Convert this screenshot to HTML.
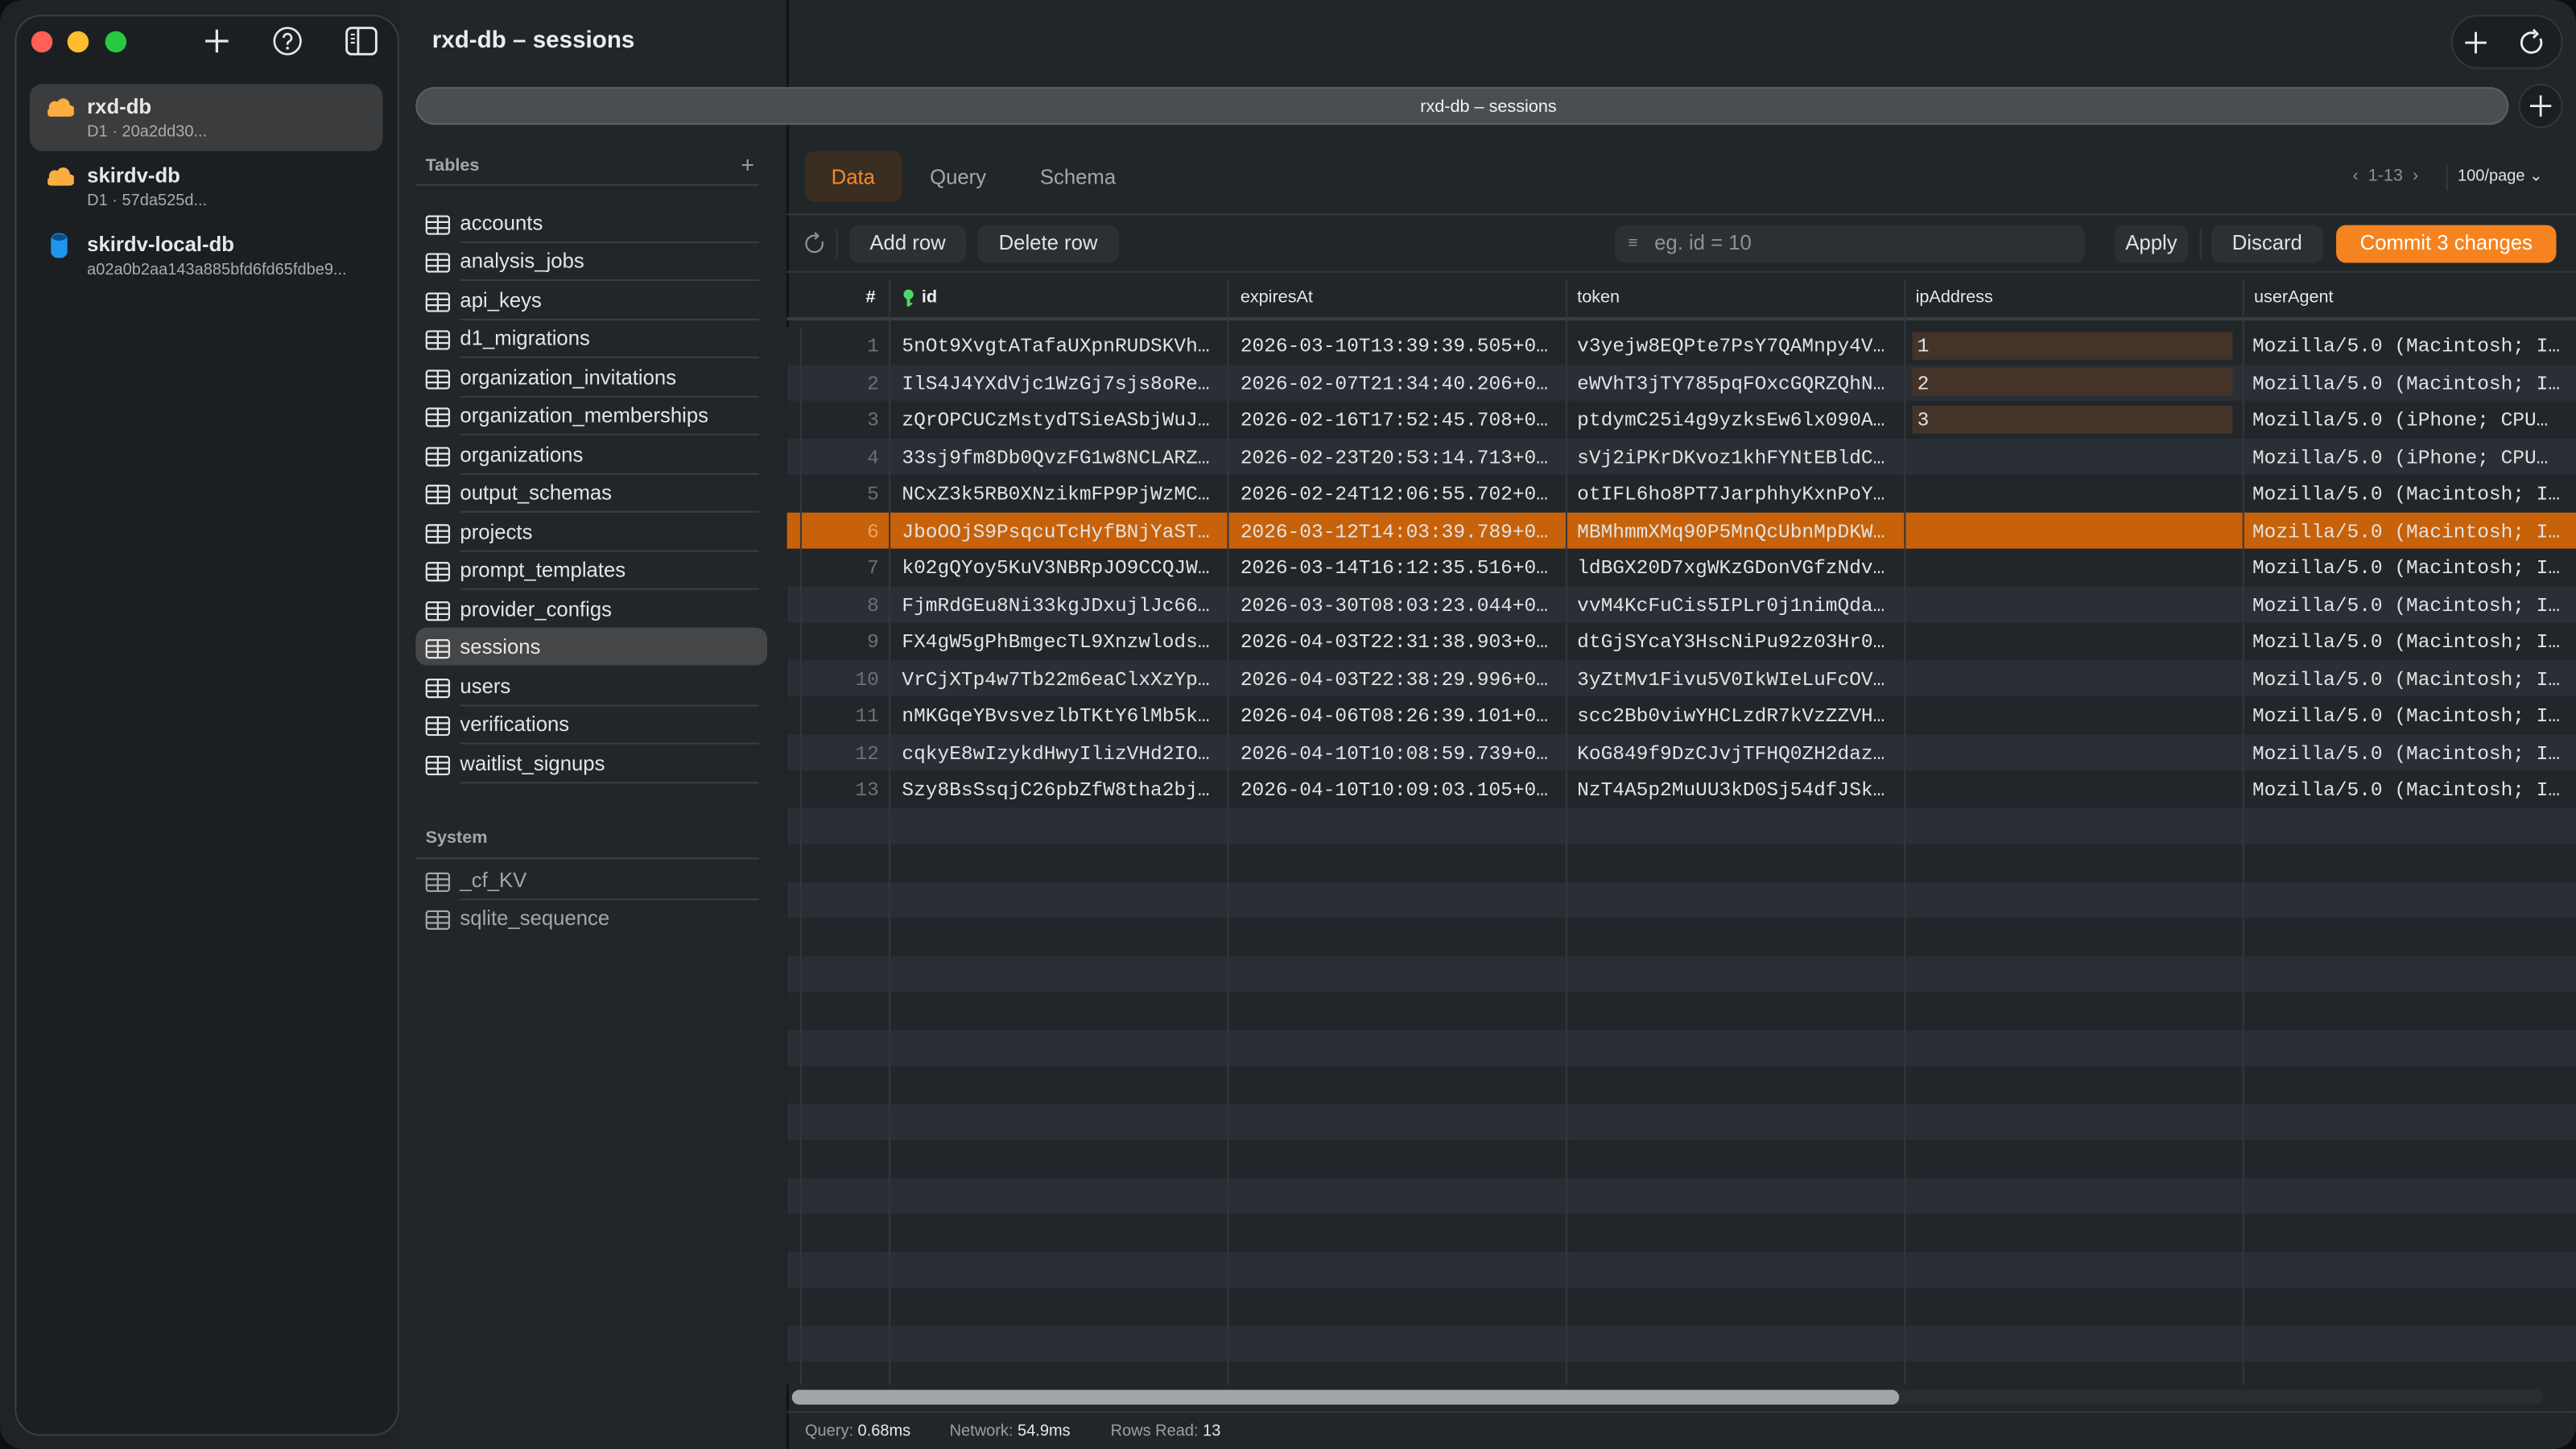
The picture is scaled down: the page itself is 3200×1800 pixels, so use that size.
<!DOCTYPE html>
<html><head><meta charset="utf-8"><style>
*{box-sizing:border-box;margin:0;padding:0}
html,body{width:3200px;height:1800px;overflow:hidden;background:#0d0e10}
#s{position:absolute;left:0;top:0;width:1568px;height:882px;transform:scale(2.040816);transform-origin:0 0;font-family:"Liberation Sans",sans-serif;color:#e6e7e8}
.win{position:absolute;left:0;top:0;width:1568px;height:882px;border-radius:14px;background:#1f2227;overflow:hidden}
.a{position:absolute;white-space:nowrap}
.side{left:9px;top:9px;width:234px;height:865px;border-radius:16px;background:#1b1f21;border:1px solid #3a3e43}
.mid{left:243px;top:0;width:235px;height:882px;background:#212629}
.main{left:479px;top:0;width:1089px;height:882px;background:#212629;border-left:1px solid #0c0d0e}
.tl{width:13px;height:13px;border-radius:50%;top:19px}
.ti{font-size:12.6px;color:#e8e9ea}
.sep{height:1px;background:#34383c}
.btn{height:23px;border-radius:6px;background:#2c3035;font-size:12.6px;color:#e0e1e2;text-align:center;line-height:23px}
.row{position:absolute;left:0;width:1089px;height:22.5px}
.row .c{position:absolute;top:1px;line-height:22.5px;font-family:"Liberation Mono",monospace;font-size:12px;color:#e2e3e4;white-space:nowrap}
.row .n{width:56px;text-align:right;color:#6d7176;left:0}
.vl{position:absolute;top:170px;width:1px;background:#33373c}
</style></head><body><div id="s"><div class="win">

<div class="a side"></div>
<div class="a tl" style="left:19px;background:#fe5f57"></div>
<div class="a tl" style="left:41px;background:#febc2e"></div>
<div class="a tl" style="left:64px;background:#28c840"></div>
<svg class="a" style="left:124px;top:17px" width="16" height="16" viewBox="0 0 16 16"><path d="M8 1v14M1 8h14" stroke="#e6e7e8" stroke-width="1.6"/></svg>
<svg class="a" style="left:166px;top:16px" width="18" height="18" viewBox="0 0 18 18"><circle cx="9" cy="9" r="8" fill="none" stroke="#e6e7e8" stroke-width="1.3"/><path d="M6.6 7a2.4 2.4 0 1 1 3.4 2.2c-.7.4-1 .8-1 1.6v.5" fill="none" stroke="#e6e7e8" stroke-width="1.3"/><circle cx="9" cy="13.3" r=".9" fill="#e6e7e8"/></svg>
<svg class="a" style="left:210px;top:16px" width="20" height="18" viewBox="0 0 20 18"><rect x="1" y="1" width="18" height="16" rx="3" fill="none" stroke="#e6e7e8" stroke-width="1.4"/><path d="M8 1v16" stroke="#e6e7e8" stroke-width="1.4"/><path d="M3.5 5h2.5M3.5 7.5h2.5M3.5 10h2.5" stroke="#e6e7e8" stroke-width="1"/></svg>

<div class="a" style="left:18px;top:51px;width:215px;height:41px;border-radius:8px;background:#3b3c3e"></div>
<svg class="a" style="left:29px;top:58px" width="16" height="14" viewBox="0 0 16 14"><path d="M2 13a2.5 2.5 0 0 1-1-4.8A3.5 3.5 0 0 1 6 4a4 4 0 0 1 7.5 2A3.4 3.4 0 0 1 13 13z" fill="#fbad41"/></svg>
<div class="a" style="left:53px;top:58px;font-size:12.6px;font-weight:bold">rxd-db</div>
<div class="a" style="left:53px;top:75px;font-size:9.8px;color:#a9abad">D1 · 20a2dd30...</div>
<svg class="a" style="left:29px;top:100px" width="16" height="14" viewBox="0 0 16 14"><path d="M2 13a2.5 2.5 0 0 1-1-4.8A3.5 3.5 0 0 1 6 4a4 4 0 0 1 7.5 2A3.4 3.4 0 0 1 13 13z" fill="#fbad41"/></svg>
<div class="a" style="left:53px;top:100px;font-size:12.6px;font-weight:bold">skirdv-db</div>
<div class="a" style="left:53px;top:117px;font-size:9.8px;color:#a9abad">D1 · 57da525d...</div>
<svg class="a" style="left:30px;top:141px" width="12" height="17" viewBox="0 0 12 17"><rect x="1" y="1" width="10" height="15" rx="4" fill="#1e96f0"/><ellipse cx="6" cy="3.5" rx="4.3" ry="2" fill="#0b4e86"/></svg>
<div class="a" style="left:53px;top:142px;font-size:12.6px;font-weight:bold">skirdv-local-db</div>
<div class="a" style="left:53px;top:159px;font-size:9.8px;color:#a9abad">a02a0b2aa143a885bfd6fd65fdbe9...</div>

<div class="a mid"></div>
<div class="a" style="left:263px;top:17px;font-size:14.5px;font-weight:bold;color:#eceded">rxd-db – sessions</div>
<div class="a" style="left:259px;top:95px;font-size:10.6px;font-weight:bold;color:#a4a7aa">Tables</div>
<div class="a" style="left:451px;top:92px;font-size:14px;color:#9a9da0">+</div>
<div class="a sep" style="left:253px;top:112px;width:209px;background:#3c4045"></div>

<div class="a" style="left:253px;top:382px;width:214px;height:23px;border-radius:7px;background:#444648"></div>

<div id="tables"></div>

<div class="a" style="left:259px;top:504px;font-size:10.6px;font-weight:bold;color:#a4a7aa">System</div>
<div class="a sep" style="left:253px;top:522px;width:209px;background:#3c4045"></div>

<div class="a main"></div>
<div class="a" style="left:1492px;top:9px;width:68px;height:33px;border-radius:17px;background:#1c1f22;border:1px solid #33373a"></div>
<svg class="a" style="left:1499px;top:18px" width="16" height="16" viewBox="0 0 16 16"><path d="M8 1.5v13M1.5 8h13" stroke="#eee" stroke-width="1.4"/></svg>
<svg class="a" style="left:1532px;top:17px" width="18" height="18" viewBox="0 0 18 18"><path d="M14.3 6.5A6 6 0 1 1 11 3.4" fill="none" stroke="#eee" stroke-width="1.4"/><path d="M10 1l2.5 2.6L10 6" fill="none" stroke="#eee" stroke-width="1.4"/></svg>

<div class="a" style="left:253px;top:53px;width:1274px;height:23px;border-radius:12px;background:#4b4e51;border:1px solid #5c5f62"></div>
<div class="a" style="left:279px;top:59px;width:1254px;text-align:center;font-size:10.6px;color:#f2f2f2">rxd-db – sessions</div>
<div class="a" style="left:1533px;top:51px;width:27px;height:27px;border-radius:50%;background:#1c1f22;border:1px solid #33373a"></div>
<svg class="a" style="left:1540px;top:58px" width="13" height="13" viewBox="0 0 13 13"><path d="M6.5 0v13M0 6.5h13" stroke="#eee" stroke-width="1.3"/></svg>

<div class="a" style="left:490px;top:92px;width:59px;height:31px;border-radius:6px;background:#3a2d22"></div>
<div class="a" style="left:506px;top:101px;font-size:12.6px;color:#f38a2c">Data</div>
<div class="a" style="left:566px;top:101px;font-size:12.6px;color:#a4a7aa">Query</div>
<div class="a" style="left:633px;top:101px;font-size:12.6px;color:#a4a7aa">Schema</div>
<div class="a" style="left:1432px;top:101px;font-size:10.6px;color:#8c8f93">‹&nbsp; 1-13 &nbsp;›</div>
<div class="a" style="left:1489px;top:100px;width:1px;height:16px;background:#34383c"></div>
<div class="a" style="left:1496px;top:102px;font-size:9.8px;color:#e0e1e2">100/page ⌄</div>
<div class="a sep" style="left:479px;top:130px;width:1089px;background:#34383c"></div>

<svg class="a" style="left:489px;top:141px" width="14" height="15" viewBox="0 0 14 15"><path d="M11.5 6A5 5 0 1 1 8 2.6" fill="none" stroke="#8e9195" stroke-width="1.1"/><path d="M7 .6l2 2-2 2" fill="none" stroke="#8e9195" stroke-width="1.1"/></svg>
<div class="a" style="left:509px;top:140px;width:1px;height:17px;background:#34383c"></div>
<div class="a btn" style="left:517px;top:137px;width:71px">Add row</div>
<div class="a btn" style="left:595px;top:137px;width:86px">Delete row</div>
<div class="a btn" style="left:983px;top:137px;width:286px;text-align:left;padding-left:24px;color:#8e9195">eg. id = 10</div>
<div class="a" style="left:991px;top:143px;font-size:10px;color:#8e9195">≡</div>
<div class="a btn" style="left:1287px;top:137px;width:45px">Apply</div>
<div class="a" style="left:1339px;top:140px;width:1px;height:17px;background:#34383c"></div>
<div class="a btn" style="left:1346px;top:137px;width:68px">Discard</div>
<div class="a btn" style="left:1422px;top:137px;width:134px;background:#f5831f;color:#fff">Commit 3 changes</div>
<div class="a sep" style="left:479px;top:165px;width:1089px;background:#34383c"></div>

<div class="a" style="left:527px;top:175px;font-size:10.6px;font-weight:bold;color:#eee">#</div>
<svg class="a" style="left:549px;top:176px" width="8" height="11" viewBox="0 0 8 11"><circle cx="4" cy="3.2" r="3" fill="#4fd86b"/><path d="M3 5v5.5h2V9.5h1.3V8.3H5V5z" fill="#4fd86b"/></svg>
<div class="a" style="left:561px;top:175px;font-size:10.6px;font-weight:bold;color:#eee">id</div>
<div class="a" style="left:755px;top:175px;font-size:10.6px;color:#e6e7e8">expiresAt</div>
<div class="a" style="left:960px;top:175px;font-size:10.6px;color:#e6e7e8">token</div>
<div class="a" style="left:1166px;top:175px;font-size:10.6px;color:#e6e7e8">ipAddress</div>
<div class="a" style="left:1372px;top:175px;font-size:10.6px;color:#e6e7e8">userAgent</div>
<div class="a sep" style="left:479px;top:193px;width:1089px;background:#3a3e43;height:2px"></div>

<div class="a" id="grid" style="left:479px;top:199px;width:1089px;height:644px;overflow:hidden"></div>
<div class="vl" style="left:541px;height:673px"></div>
<div class="vl" style="left:747px;height:673px"></div>
<div class="vl" style="left:953px;height:673px"></div>
<div class="vl" style="left:1159px;height:673px"></div>
<div class="vl" style="left:1365px;height:673px"></div>
<div class="a" style="left:487px;top:199px;width:1px;height:644px;background:#33373c"></div>

<div class="a" style="left:482px;top:846px;width:1066px;height:9px;border-radius:5px;background:#2a2e33"></div>
<div class="a" style="left:482px;top:846px;width:674px;height:9px;border-radius:5px;background:#a2a4a6"></div>
<div class="a sep" style="left:479px;top:859px;width:1089px;background:#34383c"></div>
<div class="a" style="left:490px;top:866px;font-size:9.8px;color:#9c9fa2">Query: <span style="color:#e8e9ea">0.68ms</span></div>
<div class="a" style="left:578px;top:866px;font-size:9.8px;color:#9c9fa2">Network: <span style="color:#e8e9ea">54.9ms</span></div>
<div class="a" style="left:676px;top:866px;font-size:9.8px;color:#9c9fa2">Rows Read: <span style="color:#e8e9ea">13</span></div>

</div></div>
<script>
var T=["accounts","analysis_jobs","api_keys","d1_migrations","organization_invitations","organization_memberships","organizations","output_schemas","projects","prompt_templates","provider_configs","sessions","users","verifications","waitlist_signups"];
var ic='<svg width="15" height="12" viewBox="0 0 15 12"><rect x=".6" y=".6" width="13.8" height="10.8" rx="1.5" fill="none" stroke="C" stroke-width="1.1"/><path d="M.6 4.2h13.8M.6 7.8h13.8M7.5.6v10.8" stroke="C" stroke-width="1.1"/></svg>';
var h="";
function item(name,y,col,sep){h+='<div class="a" style="left:259px;top:'+(y-6)+'px">'+ic.replace(/C/g,col)+'</div><div class="a ti" style="left:280px;top:'+(y-7)+'px;color:'+col+'">'+name+'</div>';if(sep)h+='<div class="a sep" style="left:280px;top:'+(y+11)+'px;width:182px;background:#3a3e42"></div>';}
T.forEach(function(t,i){var y=135.5+23.5*i;item(t,y,"#e4e5e6",!(t=="provider_configs"||t=="sessions"));});
item("_cf_KV",535.5,"#a4a7aa",true);item("sqlite_sequence",559,"#a4a7aa",false);
document.getElementById("tables").outerHTML=h;
var R=[["5nOt9XvgtATafaUXpnRUDSKVh…","2026-03-10T13:39:39.505+0…","v3yejw8EQPte7PsY7QAMnpy4V…","1","Mozilla/5.0 (Macintosh; I…"],
["IlS4J4YXdVjc1WzGj7sjs8oRe…","2026-02-07T21:34:40.206+0…","eWVhT3jTY785pqFOxcGQRZQhN…","2","Mozilla/5.0 (Macintosh; I…"],
["zQrOPCUCzMstydTSieASbjWuJ…","2026-02-16T17:52:45.708+0…","ptdymC25i4g9yzksEw6lx090A…","3","Mozilla/5.0 (iPhone; CPU…"],
["33sj9fm8Db0QvzFG1w8NCLARZ…","2026-02-23T20:53:14.713+0…","sVj2iPKrDKvoz1khFYNtEBldC…","","Mozilla/5.0 (iPhone; CPU…"],
["NCxZ3k5RB0XNzikmFP9PjWzMC…","2026-02-24T12:06:55.702+0…","otIFL6ho8PT7JarphhyKxnPoY…","","Mozilla/5.0 (Macintosh; I…"],
["JboOOjS9PsqcuTcHyfBNjYaST…","2026-03-12T14:03:39.789+0…","MBMhmmXMq90P5MnQcUbnMpDKW…","","Mozilla/5.0 (Macintosh; I…"],
["k02gQYoy5KuV3NBRpJO9CCQJW…","2026-03-14T16:12:35.516+0…","ldBGX20D7xgWKzGDonVGfzNdv…","","Mozilla/5.0 (Macintosh; I…"],
["FjmRdGEu8Ni33kgJDxujlJc66…","2026-03-30T08:03:23.044+0…","vvM4KcFuCis5IPLr0j1nimQda…","","Mozilla/5.0 (Macintosh; I…"],
["FX4gW5gPhBmgecTL9Xnzwlods…","2026-04-03T22:31:38.903+0…","dtGjSYcaY3HscNiPu92z03Hr0…","","Mozilla/5.0 (Macintosh; I…"],
["VrCjXTp4w7Tb22m6eaClxXzYp…","2026-04-03T22:38:29.996+0…","3yZtMv1Fivu5V0IkWIeLuFcOV…","","Mozilla/5.0 (Macintosh; I…"],
["nMKGqeYBvsvezlbTKtY6lMb5k…","2026-04-06T08:26:39.101+0…","scc2Bb0viwYHCLzdR7kVzZZVH…","","Mozilla/5.0 (Macintosh; I…"],
["cqkyE8wIzykdHwyIlizVHd2IO…","2026-04-10T10:08:59.739+0…","KoG849f9DzCJvjTFHQ0ZH2daz…","","Mozilla/5.0 (Macintosh; I…"],
["Szy8BsSsqjC26pbZfW8tha2bj…","2026-04-10T10:09:03.105+0…","NzT4A5p2MuUU3kD0Sj54dfJSk…","","Mozilla/5.0 (Macintosh; I…"]];
var g="";
for(var i=0;i<29;i++){var sel=i==5;var bg=sel?"#c7620a":(i%2?"#2a2e35":"#20262a");
g+='<div class="row" style="top:'+(i*22.5)+'px;background:'+bg+'">';
if(i<13){var r=R[i];
g+='<div class="c n" style="'+(sel?'color:#f0a060':'')+'">'+(i+1)+'</div>';
g+='<div class="c" style="left:70px">'+r[0]+'</div><div class="c" style="left:276px">'+r[1]+'</div><div class="c" style="left:481px">'+r[2]+'</div>';
if(r[3])g+='<div class="a" style="left:685px;top:2.5px;width:195px;height:17px;background:#433328"></div><div class="c" style="left:688px">'+r[3]+'</div>';
g+='<div class="c" style="left:892px">'+r[4]+'</div>';}
g+='</div>';}
document.getElementById("grid").innerHTML=g;
</script>
</body></html>
